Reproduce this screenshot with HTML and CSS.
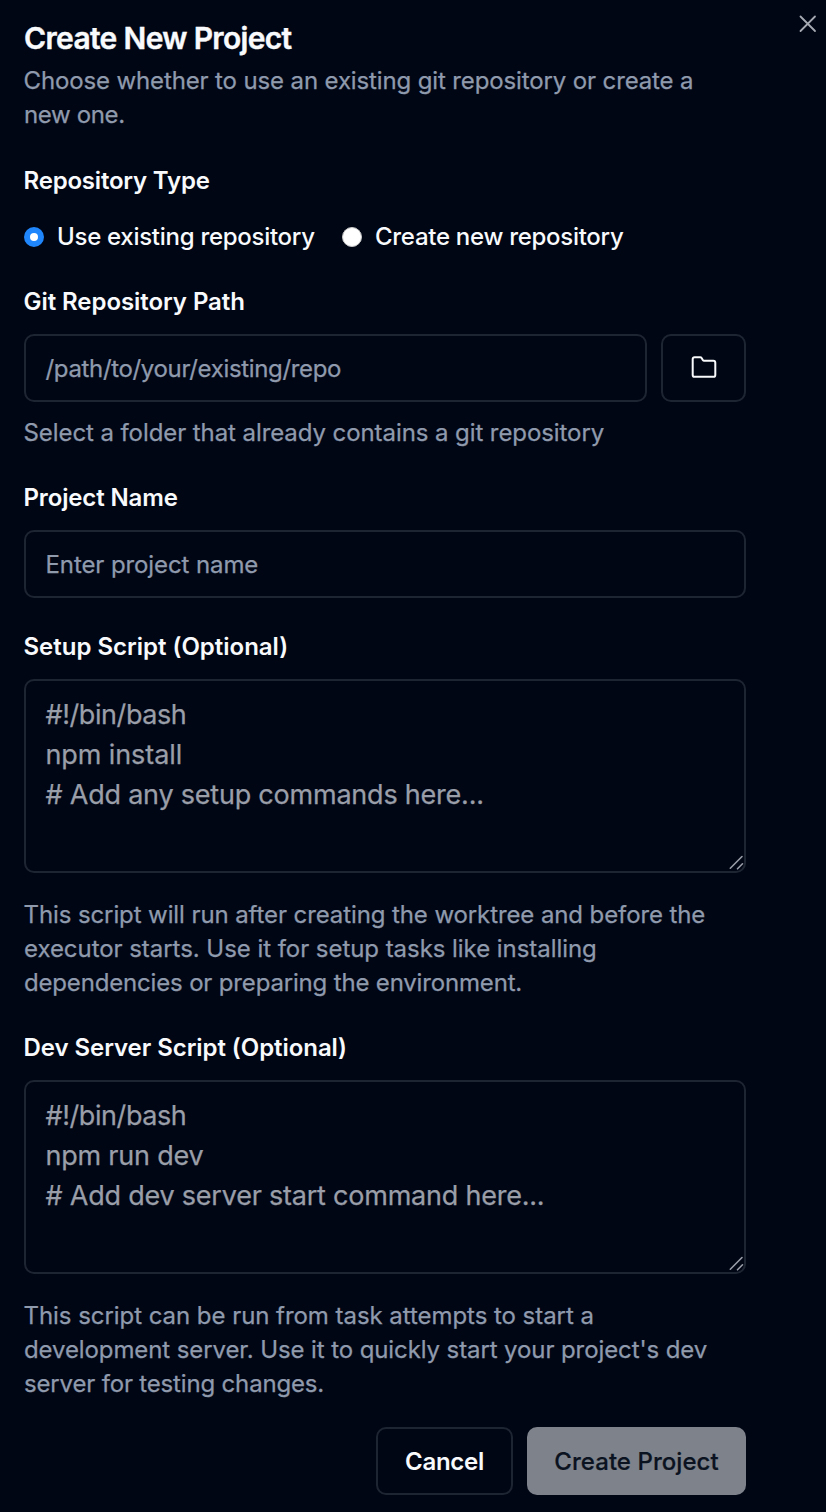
FILE: index.html
```html
<!DOCTYPE html>
<html lang="en">
<head>
<meta charset="utf-8">
<title>Create New Project</title>
<link rel="stylesheet" href="styles.css">
</head>
<body>
<main class="dialog">
  <button class="close" aria-label="Close"><svg width="18" height="18" viewBox="0 0 18 18"><path d="M1.500 1.500l14.500 14.500M16 1.500L1.500 16"/></svg></button>
  <h1 class="title">Create New Project</h1>
  <p class="text intro">Choose whether to use an existing git repository or create a<br><span class="tight">new one.</span></p>
  <h2 class="label type-label">Repository Type</h2>
  <div class="radios">
    <span class="radio on"></span><span class="option first">Use existing repository</span>
    <span class="radio"></span><span class="option">Create new repository</span>
  </div>
  <h2 class="label path-label">Git Repository Path</h2>
  <div class="path-row">
    <div class="input path-input">/path/to/your/existing/repo</div>
    <button class="browse" aria-label="Browse"><svg width="28" height="28" viewBox="0 0 28 28"><path d="M4.600 3.200h5.600q.9 0 1.400.8l1.200 2q.5.800 1.400.800h9.200q1.900 0 1.900 1.900v12.200q0 1.900-1.900 1.900H4.600q-1.900 0-1.900-1.900V5.100q0-1.900 1.900-1.900Z"/></svg></button>
  </div>
  <p class="text hint">Select a folder that already contains a git repository</p>
  <h2 class="label name-label">Project Name</h2>
  <div class="input">Enter project name</div>
  <h2 class="label script-label">Setup Script (Optional)</h2>
  <div class="area"><span class="shebang">#!/bin/bash</span><br><span class="loose">npm install</span><br># Add any setup commands here...<svg class="grip" width="16" height="16" viewBox="0 0 16 16"><path d="M2.300 13.200L14 1.500M9.500 13.800l5-5"/></svg></div>
  <p class="text note">This script will run after creating the worktree and before the<br><span class="loose">executor starts. Use it for setup tasks like installing</span><br><span class="tight">dependencies or preparing the environment.</span></p>
  <h2 class="label dev-label">Dev Server Script (Optional)</h2>
  <div class="area"><span class="shebang">#!/bin/bash</span><br>npm run dev<br># Add dev server start command here...<svg class="grip" width="16" height="16" viewBox="0 0 16 16"><path d="M2.300 13.200L14 1.500M9.500 13.800l5-5"/></svg></div>
  <p class="text note"><span class="loose">This script can be run from task attempts to start a</span><br>development server. Use it to quickly start your project's dev<br><span class="tight">server for testing changes.</span></p>
  <div class="actions"><button class="btn cancel">Cancel</button><button class="btn create">Create Project</button></div>
</main>
</body>
</html>
```
FILE: styles.css
```css
* { box-sizing: border-box; margin: 0; padding: 0; }
body { background: #010615; color: #f8fafc; font-family: Inter, sans-serif; }
.dialog { position: relative; width: 826px; height: 1512px; padding: 20px 80px 0 24px; overflow: hidden; }
svg { display: block; fill: none; stroke: currentColor; stroke-width: 2; stroke-linecap: round; stroke-linejoin: round; }
button { font: inherit; color: inherit; background: none; border: 0; }
.close { position: absolute; left: 799px; top: 15px; color: #a5a9b1; }
.close svg { stroke-width: 1.8; }
.title { font-size: 30px; line-height: 36px; font-weight: 600; letter-spacing: -0.67px; white-space: nowrap; -webkit-text-stroke: .4px currentColor; }
.text { font-size: 24px; line-height: 34px; color: #8f9aad; white-space: nowrap; letter-spacing: -.1px; text-indent: -.5px; -webkit-text-stroke: .25px currentColor; }
.intro { margin-top: 8px; letter-spacing: -.13px; }
.text .tight { letter-spacing: -.17px; }
.intro .tight { letter-spacing: -.35px; }
.text .loose { letter-spacing: -.05px; }
.label { font-size: 24px; line-height: 28px; font-weight: 600; white-space: nowrap; letter-spacing: -.06px; text-indent: -.5px; }
.type-label { margin-top: 35px; letter-spacing: -.2px; }
.radios { display: flex; align-items: center; height: 34px; margin-top: 25px; }
.radio { width: 20px; height: 20px; border-radius: 50%; background: #fff; border: 1px solid #c8c8c8; }
.radio.on { background: #fff; border: 6px solid #1f86fb; }
.option { font-size: 24px; line-height: 34px; font-weight: 500; margin-left: 13px; white-space: nowrap; letter-spacing: -.28px; }
.first { width: 285px; }
.path-label { margin-top: 34px; }
.path-row { display: grid; grid-template-columns: 623px 85px; gap: 14px; margin-top: 18px; }
.input { height: 68px; border: 2px solid #1e2532; border-radius: 10px; padding: 1px 19.500px 0; font-size: 24px; line-height: 64px; color: #8f9aad; white-space: nowrap; letter-spacing: -.1px; -webkit-text-stroke: .25px currentColor; }
.path-input { letter-spacing: -.34px; }
.path-row + .hint { margin-top: 14px; letter-spacing: -.08px; }
.browse { height: 68px; border: 2px solid #1e2532; border-radius: 10px; display: grid; place-items: center; }
.name-label { margin-top: 34px; margin-bottom: 18px; letter-spacing: -.14px; }
.script-label { margin-top: 35px; letter-spacing: -.01px; }
.area { position: relative; height: 194px; border: 2px solid #1e2532; border-radius: 10px; padding: 14px 19.500px; margin-top: 18px; font-size: 27px; line-height: 40px; color: #999ea8; white-space: nowrap; letter-spacing: -.22px; -webkit-text-stroke: .25px currentColor; }
.shebang { letter-spacing: -.42px; }
.area .loose { letter-spacing: -.1px; }
.grip { position: absolute; right: 0; bottom: 0; stroke-width: 1.6; }
.note { margin-top: 25px; }
.dev-label { margin-top: 34px; }
.actions { display: flex; justify-content: flex-end; gap: 14px; margin-top: 26px; }
.btn { height: 68px; border-radius: 10px; font-size: 24px; font-weight: 600; letter-spacing: -.3px; }
.cancel { width: 137px; border: 2px solid #1e2532; }
.create { width: 219px; background: #7d828b; color: #0b1220; font-weight: 500; letter-spacing: .05px; -webkit-text-stroke: .2px currentColor; }
```
